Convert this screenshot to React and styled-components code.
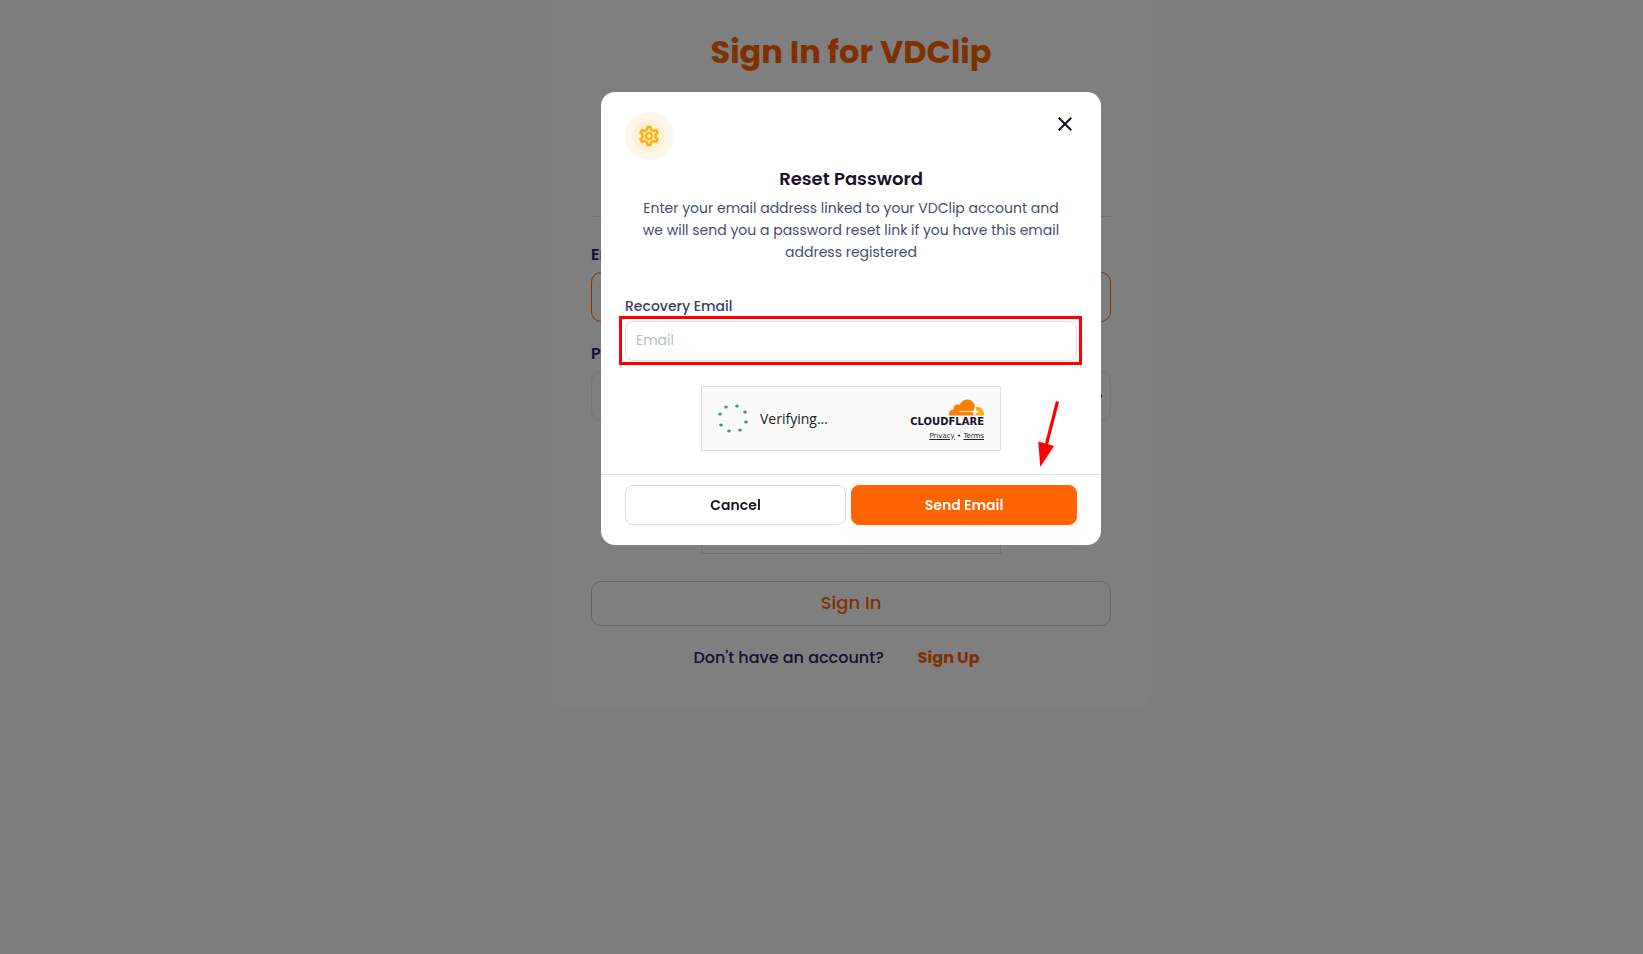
import { MdClose, MdOutlineSettings, MdVisibility } from "react-icons/md";
import styled, { createGlobalStyle } from "styled-components";

const GlobalStyle = createGlobalStyle`
  * {
    box-sizing: border-box;
  }
  body {
    margin: 0;
    min-height: 100vh;
    background-color: #fafafa;
    color: #32205c;
    font-family: Poppins, Inter, sans-serif;
    font-size: 14px;
  }
  button,
  input {
    font-family: inherit;
  }
  h1,
  h2,
  p {
    margin: 0;
  }
`;

const Page = styled.main`
  display: flex;
  justify-content: center;
  padding-left: 59px;
`;

const Card = styled.div`
  width: 100%;
  max-width: 600px;
  padding: 28px 40px 39px;
  border-radius: 0 0 16px 16px;
  background-color: white;
`;

const Title = styled.h1`
  font-size: 32px;
  line-height: 48px;
  font-weight: 700;
  text-align: center;
  color: #ff6400;
`;

const Divider = styled.hr`
  margin: 140px 0 26px;
  border: 0;
  border-top: 1px solid #e4dade;
`;

const Field = styled.div`
  display: flex;
  flex-direction: column;
  gap: 5px;
  margin-bottom: 20px;
  label {
    font-size: 16px;
    line-height: 24px;
    font-weight: 600;
  }
`;

const InputBox = styled.div`
  display: flex;
  align-items: center;
  height: 50px;
  padding: 0 7px 0 12px;
  border: 1px solid ${(props) => (props.$active ? "#ff6400" : "#ece8ec")};
  border-radius: 10px;
  input {
    flex: 1;
    border: none;
    outline: none;
    background: none;
    font-size: 16px;
  }
`;

const EyeButton = styled.button`
  display: flex;
  padding: 0;
  border: none;
  background: none;
  color: #32205c;
`;

const CaptchaRow = styled.div`
  padding-top: 48px;
`;

const SignInButton = styled.button`
  width: 100%;
  height: 45px;
  margin-top: 27px;
  padding: 0 0 2px;
  border: 1px solid #d0c8cc;
  border-radius: 10px;
  background-color: white;
  color: #ff6400;
  font-size: 18px;
  font-weight: 500;
`;

const SignUpRow = styled.div`
  display: flex;
  justify-content: center;
  gap: 34px;
  margin-top: 20px;
  padding-right: 29px;
  font-size: 16px;
  line-height: 24px;
  font-weight: 500;
  a {
    color: #ff6400;
    font-weight: 700;
    text-decoration: none;
  }
`;

const CaptchaBox = styled.div`
  display: flex;
  align-items: center;
  gap: 9px;
  width: 300px;
  height: 65px;
  margin: 0 auto;
  padding: 0 16px 0 15px;
  border: 1px solid #dedede;
  background-color: #fafafa;
  color: #232323;
  font-family: "Open Sans", "Noto Sans", sans-serif;
`;

const CaptchaBrand = styled.div`
  display: flex;
  flex-direction: column;
  align-items: flex-end;
  margin-left: auto;
  padding-top: 3px;
  color: #1a0f33;
`;

const BrandName = styled.span`
  font-family: "DejaVu Sans", sans-serif;
  font-size: 10px;
  line-height: 12px;
  font-weight: 700;
`;

const BrandLinks = styled.span`
  margin-top: 2px;
  font-family: "DejaVu Sans", sans-serif;
  font-size: 7px;
  line-height: 12px;
  a {
    color: #232323;
    text-underline-offset: 1px;
  }
`;

const Overlay = styled.div`
  position: fixed;
  inset: 0;
  display: flex;
  justify-content: center;
  align-items: flex-start;
  padding: 92px 0 0 59px;
  background-color: rgba(0, 0, 0, 0.5);
`;

const Modal = styled.div`
  width: 100%;
  max-width: 500px;
  border-radius: 14px;
  background-color: white;
`;

const ModalBody = styled.div`
  padding: 20px 24px 23px;
`;

const ModalTop = styled.div`
  display: flex;
  justify-content: space-between;
  align-items: flex-start;
`;

const IconCircle = styled.div`
  display: flex;
  justify-content: center;
  align-items: center;
  width: 48px;
  height: 48px;
  border: 8px solid #fef6e9;
  border-radius: 50%;
  background-color: #fff1d3;
  color: #ffb017;
  svg {
    flex-shrink: 0;
  }
  path:last-child {
    stroke-width: 0.6;
  }
`;

const CloseButton = styled.button`
  display: flex;
  padding: 0;
  border: none;
  background: none;
  color: #1a1127;
`;

const ModalTitle = styled.h2`
  margin-top: 5px;
  font-size: 18px;
  line-height: 28px;
  font-weight: 600;
  text-align: center;
  color: #1a1127;
`;

const ModalText = styled.p`
  margin: 4px 0 32px;
  padding: 0 16px;
  line-height: 22px;
  text-align: center;
  color: #454e6c;
`;

const RecoveryField = styled.div`
  position: relative;
  display: flex;
  flex-direction: column;
  gap: 4px;
  margin-bottom: 25px;
  label {
    line-height: 22px;
    font-weight: 500;
    color: #3a3f60;
  }
  input {
    height: 40px;
    padding: 0 10px 2px;
    border: 1px solid #dfe0e8;
    border-radius: 8px;
    outline: none;
    font-size: 14px;
    &::placeholder {
      color: #b3c3bf;
    }
  }
`;

const Highlight = styled.div`
  position: absolute;
  inset: 21px -5px -4px -6px;
  border: 3px solid #ff0000;
  pointer-events: none;
`;

const ModalFooter = styled.div`
  position: relative;
  display: flex;
  gap: 5px;
  padding: 10px 24px 20px;
  border-top: 1px solid #e4e4ea;
`;

const FooterButton = styled.button`
  flex: ${(props) => (props.$primary ? 226 : 221)} 1 0;
  height: 40px;
  border: 1px solid ${(props) => (props.$primary ? "#ff6400" : "#dcdce2")};
  border-radius: 8px;
  background-color: ${(props) => (props.$primary ? "#ff6400" : "white")};
  box-shadow: ${(props) =>
    props.$primary ? "0 6px 16px rgba(255, 170, 60, 0.06)" : "none"};
  color: ${(props) => (props.$primary ? "white" : "#1a1127")};
  font-size: 14px;
  font-weight: 600;
`;

const Arrow = styled.svg`
  position: absolute;
  right: 40px;
  bottom: 77px;
`;

const spinnerDots = [
  [20, 2],
  [28, 8],
  [29, 18],
  [23, 26],
  [12, 27],
  [4, 21],
  [3, 10],
  [9, 3],
];

const Spinner = () => (
  <svg width="34" height="30" viewBox="0 0 34 30">
    {spinnerDots.map(([x, y]) => (
      <ellipse key={`${x}-${y}`} cx={x} cy={y} rx="1.8" ry="1.5" fill="#3a9a5b" />
    ))}
  </svg>
);

const Cloud = () => (
  <svg width="36" height="17" viewBox="0 0 36 17">
    <path
      fill="#ff7f00"
      d="M1 16.500C.5 13 2.500 10.700 5.500 10.500C5 7 8.500 4.500 11.500 6C13 2.500 16 .5 19.500 .5C23.500 .5 26.500 3.500 27 7.500L25 16.500Z"
    />
    <path fill="#ffae18" d="M25 16.500L28 8C32.500 7 36.500 11 36 16.500Z" />
    <path stroke="#ffe3bd" strokeWidth="1.200" d="M11 12.500H24" />
    <path
      fill="white"
      d="M27 8L28.300 11.500L31.500 12.700L28.300 14L27 16.500L25.500 14L22.500 12.700L25.500 11.500Z"
    />
  </svg>
);

const Captcha = () => (
  <CaptchaBox>
    <Spinner />
    <span>Verifying...</span>
    <CaptchaBrand>
      <Cloud />
      <BrandName>CLOUDFLARE</BrandName>
      <BrandLinks>
        <a href="#">Privacy</a> • <a href="#">Terms</a>
      </BrandLinks>
    </CaptchaBrand>
  </CaptchaBox>
);

const SignIn = () => (
  <Page>
    <Card>
      <Title>Sign In for VDClip</Title>
      <Divider />
      <Field>
        <label htmlFor="email">Email</label>
        <InputBox $active>
          <input id="email" type="email" />
        </InputBox>
      </Field>
      <Field>
        <label htmlFor="password">Password</label>
        <InputBox>
          <input id="password" type="password" />
          <EyeButton type="button" aria-label="Show password">
            <MdVisibility size={24} />
          </EyeButton>
        </InputBox>
      </Field>
      <CaptchaRow>
        <Captcha />
      </CaptchaRow>
      <SignInButton type="submit">Sign In</SignInButton>
      <SignUpRow>
        <span>Don't have an account?</span>
        <a href="#">Sign Up</a>
      </SignUpRow>
    </Card>
  </Page>
);

const ResetPassword = () => (
  <Overlay>
    <Modal role="dialog" aria-labelledby="reset-title">
      <ModalBody>
        <ModalTop>
          <IconCircle>
            <MdOutlineSettings size={24} />
          </IconCircle>
          <CloseButton type="button" aria-label="Close">
            <MdClose size={24} />
          </CloseButton>
        </ModalTop>
        <ModalTitle id="reset-title">Reset Password</ModalTitle>
        <ModalText>
          Enter your email address linked to your VDClip account and we will
          send you a password reset link if you have this email address
          registered
        </ModalText>
        <RecoveryField>
          <label htmlFor="recovery">Recovery Email</label>
          <input id="recovery" type="email" placeholder="Email" />
          <Highlight />
        </RecoveryField>
        <Captcha />
      </ModalBody>
      <ModalFooter>
        <FooterButton type="button">Cancel</FooterButton>
        <FooterButton type="submit" $primary>
          Send Email
        </FooterButton>
        <Arrow width="24" height="68" viewBox="0 0 24 68">
          <path d="M20.500 1.500L9 46" stroke="#ff0000" strokeWidth="3.200" />
          <path d="M1.300 41.500L17 46L3.300 67Z" fill="#ff0000" />
        </Arrow>
      </ModalFooter>
    </Modal>
  </Overlay>
);

const App = () => (
  <>
    <GlobalStyle />
    <SignIn />
    <ResetPassword />
  </>
);
export default App;
